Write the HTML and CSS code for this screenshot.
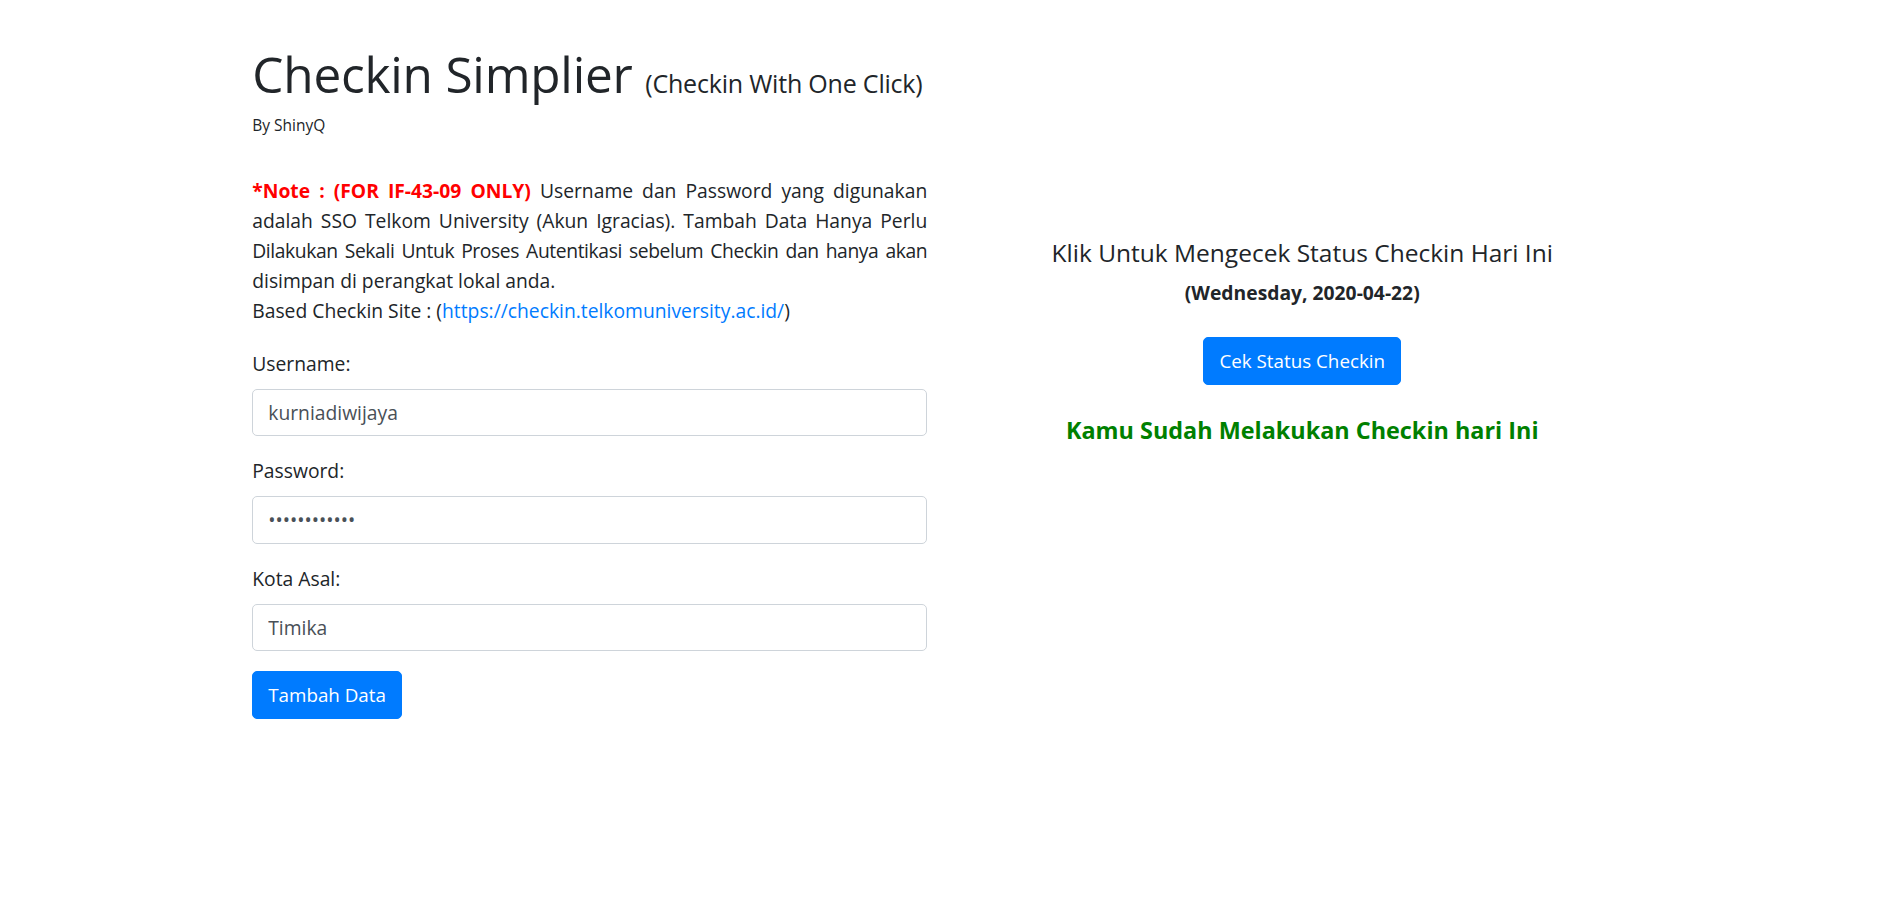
FILE: index.html
```html
<!DOCTYPE html>
<html lang="id">
<head>
<meta charset="utf-8">
<title>Checkin Simplier</title>
<link rel="stylesheet" href="styles.css">
</head>
<body>
<div class="container">
  <div class="row">
    <div class="col col-left">
      <h1 class="title">Checkin Simplier <small class="subtitle">(Checkin With One Click)</small></h1>
      <p class="by">By ShinyQ</p>
      <p class="note"><span class="note-red">*Note : (FOR IF-43-09 ONLY)</span> Username dan Password yang digunakan adalah SSO Telkom University (Akun Igracias). Tambah Data Hanya Perlu <span class="tight">Dilakukan Sekali Untuk Proses Autentikasi sebelum Checkin dan hanya akan</span> disimpan di perangkat lokal anda.<br>Based Checkin Site : (<a class="link" href="#">https://checkin.telkomuniversity.ac.id/</a>)</p>
      <form class="form">
        <div class="form-group">
          <label class="label" for="u">Username:</label>
          <input class="form-control" id="u" type="text" value="kurniadiwijaya">
        </div>
        <div class="form-group">
          <label class="label" for="p">Password:</label>
          <input class="form-control" id="p" type="password" value="kurniadiwija">
        </div>
        <div class="form-group">
          <label class="label" for="k">Kota Asal:</label>
          <input class="form-control" id="k" type="text" value="Timika">
        </div>
        <button class="btn" type="button">Tambah Data</button>
      </form>
    </div>
    <div class="col col-right">
      <h4 class="status-title">Klik Untuk Mengecek Status Checkin Hari Ini</h4>
      <h6 class="status-date">(Wednesday, 2020-04-22)</h6>
      <button class="btn btn-status" type="button">Cek Status Checkin</button>
      <h5 class="status-ok">Kamu Sudah Melakukan Checkin hari Ini</h5>
    </div>
  </div>
</div>
</body>
</html>
```

FILE: styles.css
```css
* { box-sizing: border-box; }
html, body { margin: 0; padding: 0; background: #fff; }
body {
  font-family: "Open Sans", "Noto Sans", "Liberation Sans", sans-serif;
  font-size: 20px;
  line-height: 30px;
  color: #212529;
}
.container {
  width: 1425px;
  margin: 0 auto;
  padding: 0 18.75px;
}
.row {
  display: flex;
  margin: 0 -18.75px;
}
.col {
  flex: 0 0 50%;
  padding: 0 18.75px;
}
.col-left { padding-top: 44px; }
.title {
  margin: 0;
  font-size: 49.5px;
  line-height: 60px;
  font-weight: 400;
  letter-spacing: -0.2px;
}
.subtitle {
  font-size: 25px;
  font-weight: 500;
}
.by {
  margin: 0;
  font-size: 15.5px;
  line-height: 24px;
}
.note {
  margin: 39px 0 22.5px;
  text-align: justify;
  font-size: 19.3px;
}
.tight {
  letter-spacing: -0.4px;
  word-spacing: -1.5px;
}
.note-red { color: #ff0000; font-weight: 700; }
.link { color: #007bff; text-decoration: none; }
.form-group { margin-bottom: 20px; }
.label {
  display: inline-block;
  margin-bottom: 10px;
  font-size: 19.3px;
}
.form-control {
  display: block;
  width: 100%;
  height: 47.5px;
  padding: 7.5px 15px;
  font-family: inherit;
  font-size: 19.3px;
  line-height: 30px;
  color: #495057;
  background: #fff;
  border: 1.25px solid #ced4da;
  border-radius: 5px;
  outline: none;
}
.btn {
  display: inline-block;
  height: 47.5px;
  padding: 7.5px 15px;
  font-family: inherit;
  font-size: 18.8px;
  line-height: 30px;
  color: #fff;
  background: #007bff;
  border: 1.25px solid #007bff;
  border-radius: 5px;
}
.col-right {
  padding-top: 235px;
  text-align: center;
}
.status-title {
  margin: 0 0 10px;
  font-size: 24.5px;
  line-height: 36px;
  font-weight: 400;
}
.status-date {
  margin: 0 0 32px;
  font-size: 19.3px;
  line-height: 24px;
  font-weight: 700;
}
.status-ok {
  margin: 30px 0 0;
  font-size: 23.4px;
  line-height: 30px;
  font-weight: 700;
  color: #008000;
}
```
